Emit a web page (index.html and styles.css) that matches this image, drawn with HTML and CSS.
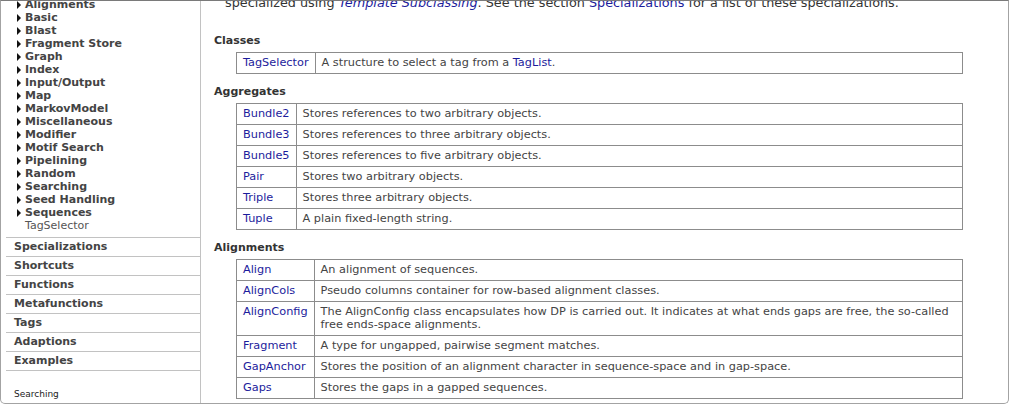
FILE: index.html
```html
<!DOCTYPE html>
<html>
<head>
<meta charset="utf-8">
<link rel="stylesheet" href="styles.css">
</head>
<body>
<div class="frame">
  <nav class="sidebar">
    <ul class="tree">
      <li class="node"><span class="tri"></span>Alignments</li>
      <li class="node"><span class="tri"></span>Basic</li>
      <li class="node"><span class="tri"></span>Blast</li>
      <li class="node"><span class="tri"></span>Fragment Store</li>
      <li class="node"><span class="tri"></span>Graph</li>
      <li class="node"><span class="tri"></span>Index</li>
      <li class="node"><span class="tri"></span>Input/Output</li>
      <li class="node"><span class="tri"></span>Map</li>
      <li class="node"><span class="tri"></span>MarkovModel</li>
      <li class="node"><span class="tri"></span>Miscellaneous</li>
      <li class="node"><span class="tri"></span>Modifier</li>
      <li class="node"><span class="tri"></span>Motif Search</li>
      <li class="node"><span class="tri"></span>Pipelining</li>
      <li class="node"><span class="tri"></span>Random</li>
      <li class="node"><span class="tri"></span>Searching</li>
      <li class="node"><span class="tri"></span>Seed Handling</li>
      <li class="node"><span class="tri"></span>Sequences</li>
      <li class="leaf">TagSelector</li>
    </ul>
    <ul class="sections">
      <li class="section">Specializations</li>
      <li class="section">Shortcuts</li>
      <li class="section">Functions</li>
      <li class="section">Metafunctions</li>
      <li class="section">Tags</li>
      <li class="section">Adaptions</li>
      <li class="section">Examples</li>
    </ul>
    <div class="status">Searching</div>
  </nav>
  <main class="main">
    <p class="intro">specialized using <a class="em" href="#">Template Subclassing</a>. See the section <a href="#">Specializations</a> for a list of these specializations.</p>

    <h3 class="heading">Classes</h3>
    <table class="listing">
      <tr><td class="name"><a href="#">TagSelector</a></td><td class="desc">A structure to select a tag from a <a href="#">TagList</a>.</td></tr>
    </table>

    <h3 class="heading">Aggregates</h3>
    <table class="listing">
      <tr><td class="name"><a href="#">Bundle2</a></td><td class="desc">Stores references to two arbitrary objects.</td></tr>
      <tr><td class="name"><a href="#">Bundle3</a></td><td class="desc">Stores references to three arbitrary objects.</td></tr>
      <tr><td class="name"><a href="#">Bundle5</a></td><td class="desc">Stores references to five arbitrary objects.</td></tr>
      <tr><td class="name"><a href="#">Pair</a></td><td class="desc">Stores two arbitrary objects.</td></tr>
      <tr><td class="name"><a href="#">Triple</a></td><td class="desc">Stores three arbitrary objects.</td></tr>
      <tr><td class="name"><a href="#">Tuple</a></td><td class="desc">A plain fixed-length string.</td></tr>
    </table>

    <h3 class="heading">Alignments</h3>
    <table class="listing">
      <tr><td class="name"><a href="#">Align</a></td><td class="desc">An alignment of sequences.</td></tr>
      <tr><td class="name"><a href="#">AlignCols</a></td><td class="desc">Pseudo columns container for row-based alignment classes.</td></tr>
      <tr><td class="name"><a href="#">AlignConfig</a></td><td class="desc">The AlignConfig class encapsulates how DP is carried out. It indicates at what ends gaps are free, the so-called free ends-space alignments.</td></tr>
      <tr><td class="name"><a href="#">Fragment</a></td><td class="desc">A type for ungapped, pairwise segment matches.</td></tr>
      <tr><td class="name"><a href="#">GapAnchor</a></td><td class="desc">Stores the position of an alignment character in sequence-space and in gap-space.</td></tr>
      <tr><td class="name"><a href="#">Gaps</a></td><td class="desc">Stores the gaps in a gapped sequences.</td></tr>
    </table>
  </main>
</div>
</body>
</html>
```
FILE: styles.css
```css
html, body {
  margin: 0;
  padding: 0;
  background: #fff;
}
body {
  font-family: "DejaVu Sans", Verdana, sans-serif;
}
.frame {
  box-sizing: border-box;
  width: 1009px;
  height: 404px;
  border: 1px solid #a3a3a3;
  border-top-color: #7a7a7a;
  border-radius: 0 0 5px 5px;
  display: flex;
  overflow: hidden;
}
.sidebar {
  flex: none;
  width: 199px;
  border-right: 1px solid #c2c2c2;
  display: flex;
  flex-direction: column;
  overflow: hidden;
}
.tree {
  list-style: none;
  margin: -3px 0 0 0;
  padding: 0;
}
.node {
  display: flex;
  align-items: center;
  gap: 4px;
  padding-left: 16px;
  height: 13px;
  line-height: 13px;
  font-size: 11px;
  font-weight: bold;
  color: #444;
  white-space: nowrap;
}
.tri {
  flex: none;
  width: 0;
  height: 0;
  border-left: 4px solid #111;
  border-top: 4px solid transparent;
  border-bottom: 4px solid transparent;
}
.leaf {
  padding-left: 24px;
  height: 13px;
  line-height: 13px;
  font-size: 11px;
  color: #555;
}
.sections {
  list-style: none;
  margin: 5px 0 0 5px;
  padding: 0;
  border-bottom: 1px solid #c2c2c2;
}
.section {
  border-top: 1px solid #c2c2c2;
  height: 18px;
  line-height: 18px;
  padding-left: 8px;
  font-size: 11px;
  font-weight: bold;
  color: #444;
}
.status {
  margin: 17px 0 0 13px;
  font-size: 9px;
  line-height: 12px;
  color: #222;
}
.main {
  flex: 1;
  min-width: 0;
  padding-left: 13px;
  overflow: hidden;
}
.intro {
  margin: -6px 0 0 11px;
  font-size: 12.8px;
  line-height: 16px;
  color: #333;
  white-space: nowrap;
}
a {
  color: #1c1c9c;
  text-decoration: none;
}
.em {
  font-style: italic;
}
.heading {
  margin: 23px 0 5px 0;
  font-size: 11px;
  line-height: 13px;
  font-weight: bold;
  color: #333;
}
.intro + .heading {
  margin-top: 23px;
}
.listing + .heading {
  margin-top: 11px;
}
.listing {
  margin-left: 22px;
  width: 727px;
  border-collapse: collapse;
  font-size: 11.3px;
  line-height: 13px;
  color: #444;
}
.listing td {
  border: 1px solid #8c8c8c;
  padding: 3px 6px 4px 6px;
  vertical-align: top;
}
.listing .name {
  width: 1%;
  white-space: nowrap;
}
```
